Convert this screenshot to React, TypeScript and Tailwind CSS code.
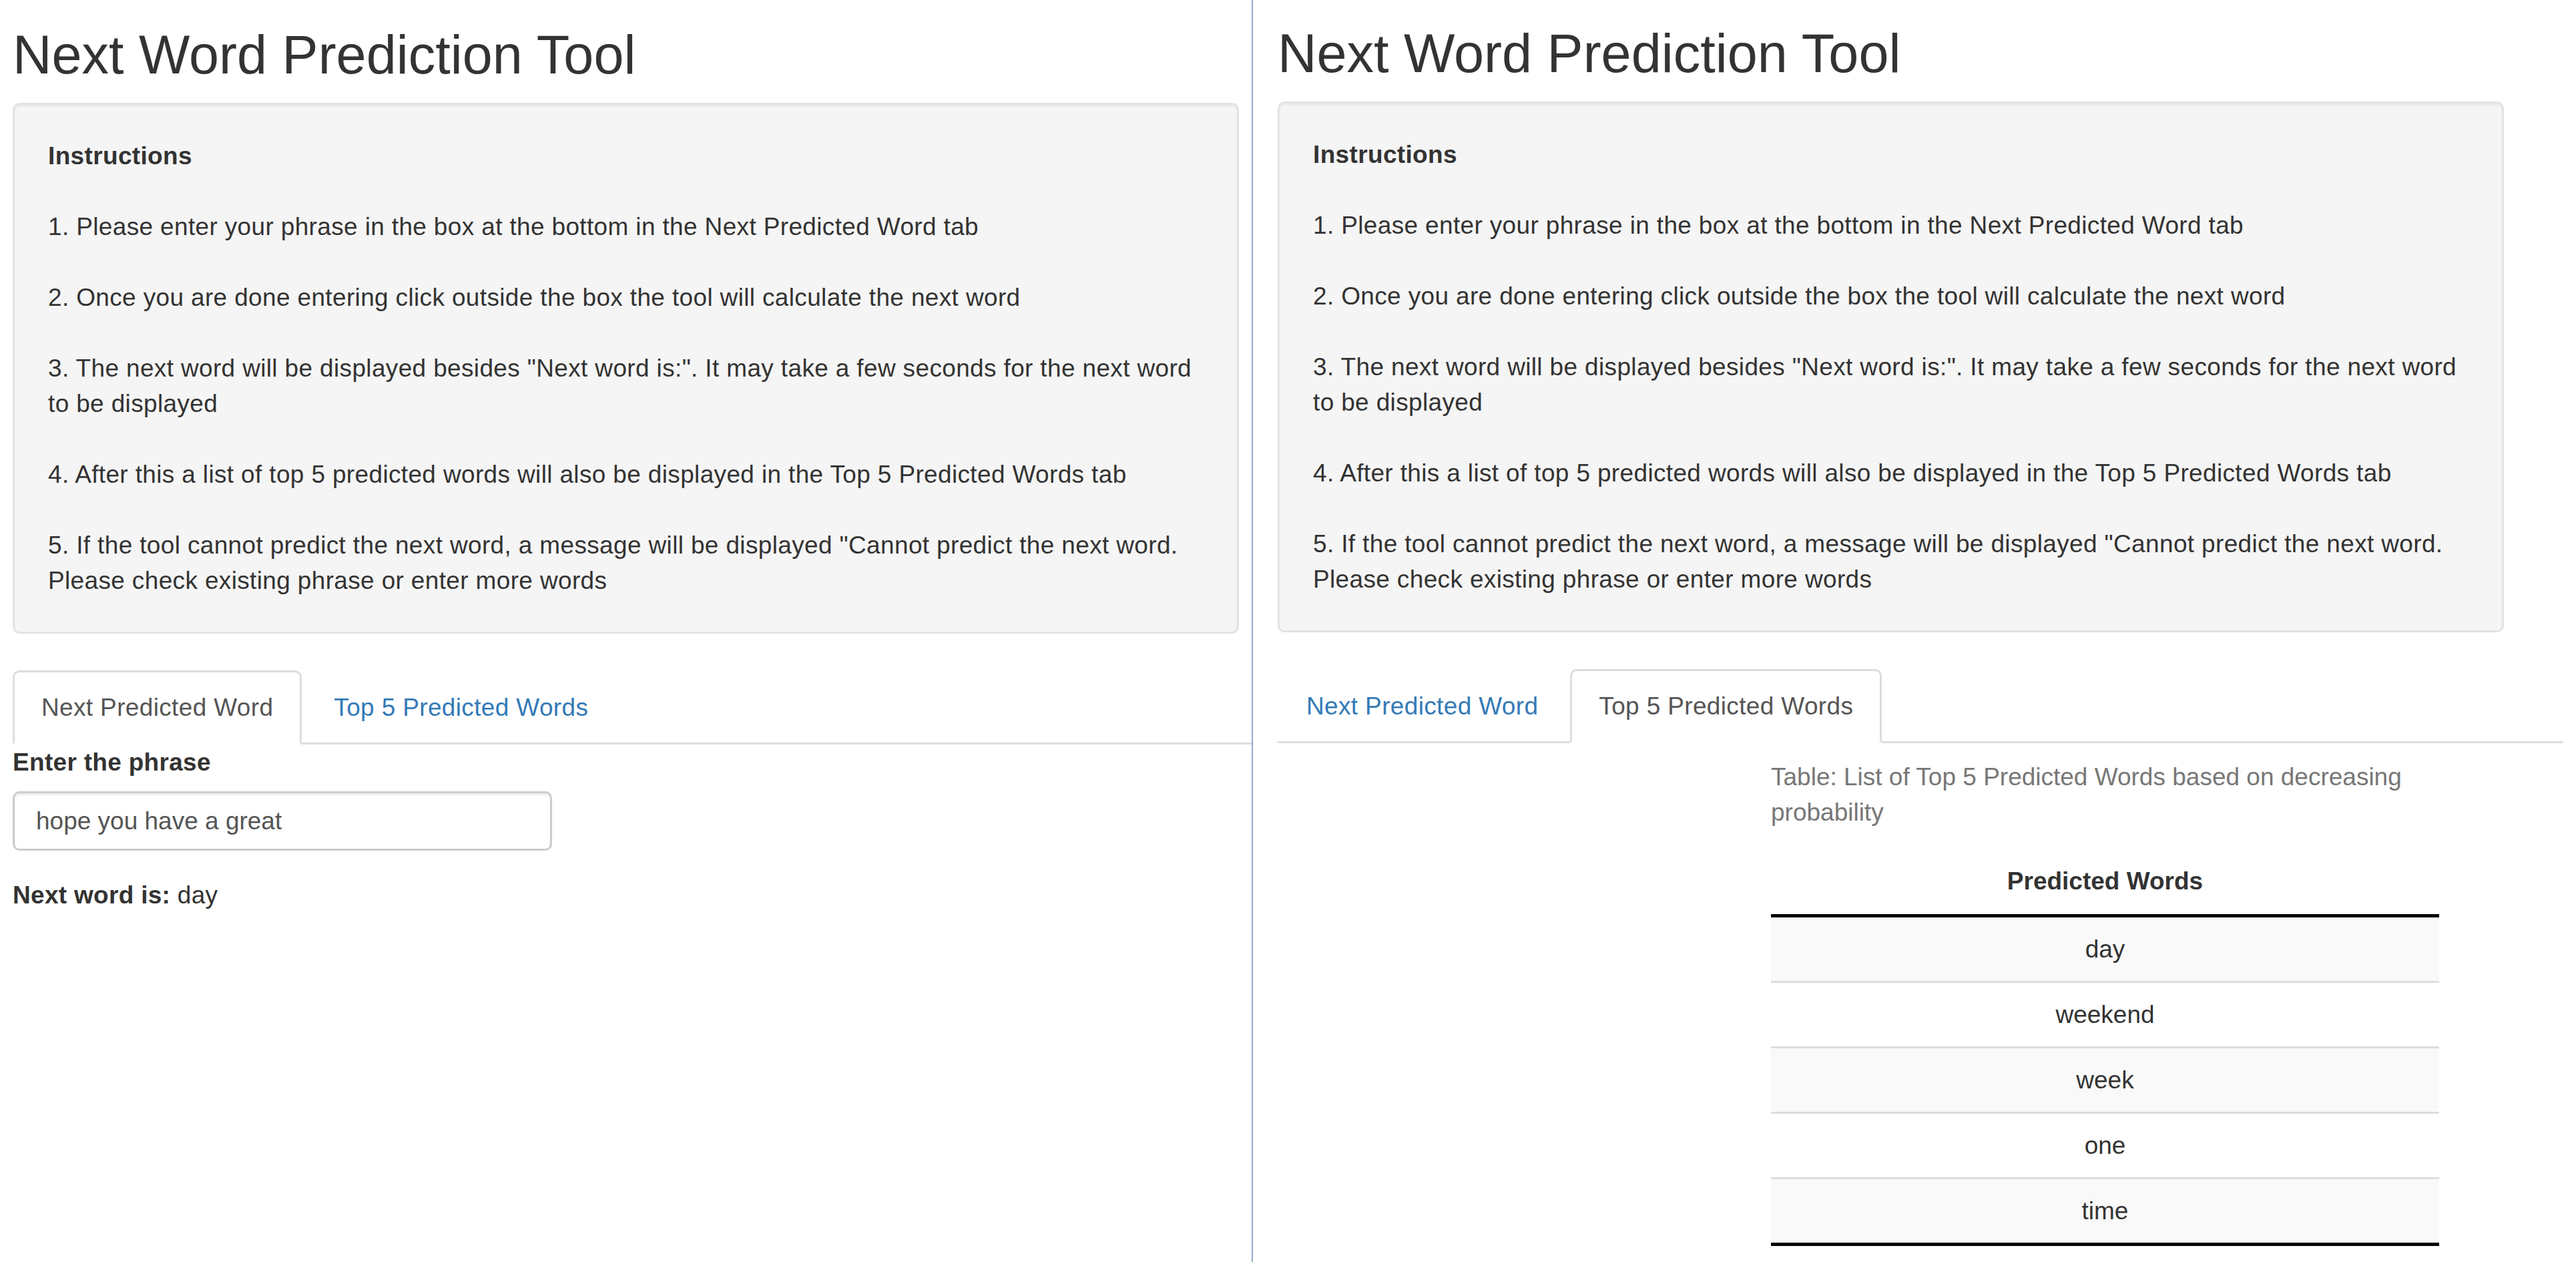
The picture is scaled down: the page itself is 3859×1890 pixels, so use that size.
import React from 'react';

const steps = [
    '1. Please enter your phrase in the box at the bottom in the Next Predicted Word tab',
    '2. Once you are done entering click outside the box the tool will calculate the next word',
    '3. The next word will be displayed besides "Next word is:". It may take a few seconds for the next word to be displayed',
    '4. After this a list of top 5 predicted words will also be displayed in the Top 5 Predicted Words tab',
    '5. If the tool cannot predict the next word, a message will be displayed "Cannot predict the next word. Please check existing phrase or enter more words',
];

const predictedWords = ['day', 'weekend', 'week', 'one', 'time'];

const tabLabels = ['Next Predicted Word', 'Top 5 Predicted Words'];

const Tabs: React.FC<{ active: number }> = ({ active }) => (
    <ul className="flex w-[1926px] border-b-[3px] border-[#ddd] tracking-[0.35px]">
        {tabLabels.map((label, i) => (
            <li key={label} className="-mb-[3px] mr-[5px]">
                <a
                    className={
                        i === active
                            ? 'block rounded-t-[10px] border-[3px] border-[#ddd] border-b-transparent bg-white px-[40px] py-[26px] text-[#555]'
                            : 'block rounded-t-[10px] border-[3px] border-transparent px-[40px] py-[26px] text-[#337ab7]'
                    }
                >
                    {label}
                </a>
            </li>
        ))}
    </ul>
);

const Instructions = () => (
    <div className="w-[1837px] rounded-[10px] border-[3px] border-[#e3e3e3] bg-[#f5f5f5] p-[50px] shadow-[inset_0_3px_3px_rgba(0,0,0,0.05)] tracking-[0.35px]">
        <p className="font-bold">Instructions</p>
        {steps.map((step) => (
            <p key={step} className="mt-[53px]">{step}</p>
        ))}
    </div>
);

const NextWordTab = () => (
    <div>
        <label className="block font-bold mb-[17px] tracking-[0.3px]">Enter the phrase</label>
        <input
            readOnly
            value="hope you have a great"
            className="block h-[89px] w-[808px] rounded-[10px] border-[3px] border-[#ccc] bg-white px-[32px] text-[#555] leading-[53px] shadow-[inset_0_3px_3px_rgba(0,0,0,0.075)] outline-none"
        />
        <p className="mt-[40px] tracking-[0.3px]">
            <span className="font-bold">Next word is:</span> day
        </p>
    </div>
);

const TopWordsTab = () => (
    <div className="pl-[739px] pt-[3px]">
        <table className="w-[1001px] border-separate border-spacing-0">
            <caption className="pt-[21px] pb-[29px] text-left text-[#777]">
                Table: List of Top 5 Predicted Words based on decreasing probability
            </caption>
            <thead>
                <tr>
                    <th className="border-b-[5px] border-black px-[21px] pt-[21px] pb-[23px] text-center font-bold">Predicted Words</th>
                </tr>
            </thead>
            <tbody>
                {predictedWords.map((word, i) => (
                    <tr key={word} className={i % 2 === 0 ? 'bg-[#f9f9f9]' : 'bg-white'}>
                        <td
                            className={
                                'px-[21px] py-[21px] text-center ' +
                                (i > 0 ? 'border-t-[3px] border-[#ddd] ' : '') +
                                (i === predictedWords.length - 1 ? 'border-b-[5px] border-b-black' : '')
                            }
                        >
                            {word}
                        </td>
                    </tr>
                ))}
            </tbody>
        </table>
    </div>
);

const Window: React.FC<{ active: number; className: string }> = ({ active, className }) => (
    <div className={className}>
        <h2 className="text-[81px] leading-[88px] mb-[28px]">Next Word Prediction Tool</h2>
        <Instructions />
        <div className="mt-[55px]">
            <Tabs active={active} />
            {active === 0 ? <NextWordTab /> : <TopWordsTab />}
        </div>
    </div>
);

export default function App() {
    return (
        <div className="flex h-[1890px] w-[3859px] overflow-hidden bg-white font-['Liberation_Sans',Arial,sans-serif] text-[37px] leading-[53px] text-[#333]">
            <Window active={0} className="w-[1875px] shrink-0 overflow-hidden pl-[19px] pt-[38px]" />
            <div className="w-[2px] shrink-0 bg-[#8ea9cc]" />
            <Window active={1} className="flex-1 overflow-hidden pl-[37px] pt-[36px]" />
        </div>
    );
}
